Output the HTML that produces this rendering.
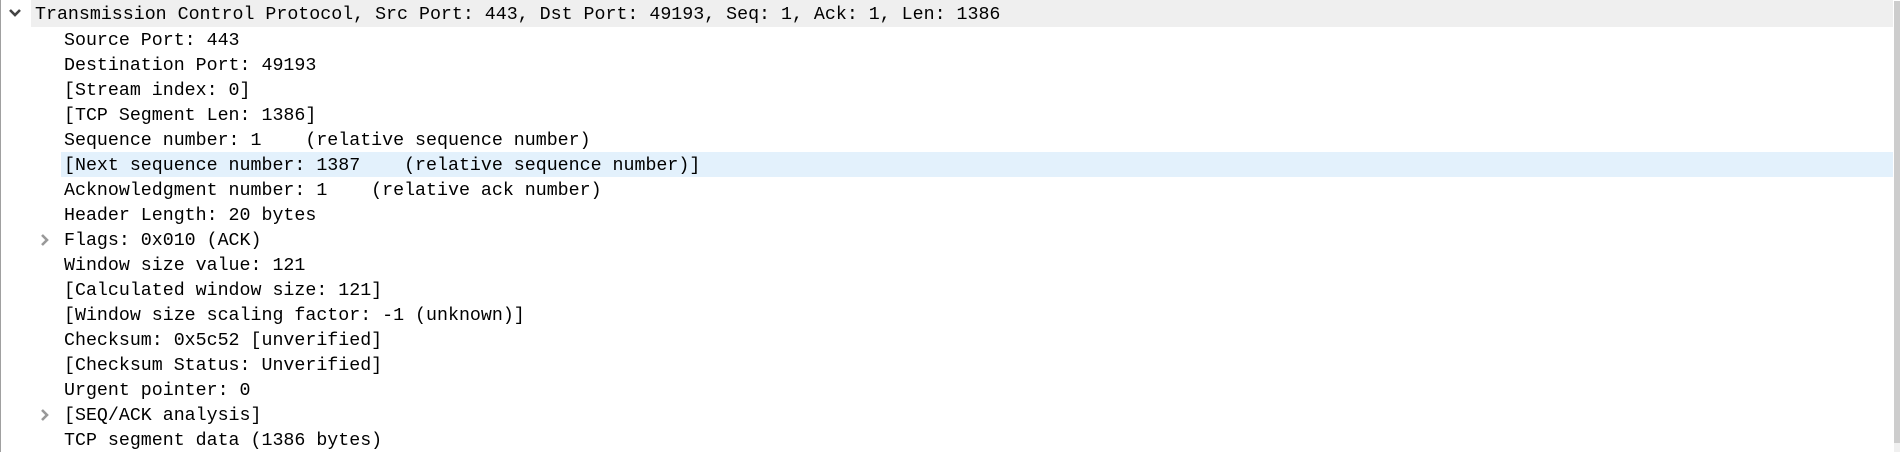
<!DOCTYPE html>
<html><head><meta charset="utf-8"><style>
html,body{margin:0;padding:0;width:1900px;height:452px;overflow:hidden;background:#fff;position:relative;
font-family:"Liberation Mono",monospace;font-size:18.3px;color:#000}
.border{position:absolute;left:0;top:0;width:1px;height:452px;background:#a0a0a0}
.sb{position:absolute;left:1894px;top:1px;width:6px;height:442px;background:#cdcdcd}
.sb2{position:absolute;left:1894px;top:443px;width:6px;height:9px;background:#f0f0f0}
.row{position:absolute;left:0;height:25px;line-height:25px;white-space:pre;margin-top:2px}
.hdr{position:absolute;left:31px;top:0;width:1862px;height:27px;background:#efefef}
.hl{position:absolute;left:61px;top:152px;width:1832px;height:25px;background:#e3f1fc}
svg{position:absolute}
</style></head><body>
<div class="border"></div>
<div class="hdr"></div>
<div class="hl"></div>
<svg style="left:7px;top:6px" width="16" height="14" viewBox="0 0 16 14"><path d="M3 4 L8 9 L13 4" fill="none" stroke="#444" stroke-width="2.6"/></svg>
<div class="row" style="left:35px;top:1px">Transmission Control Protocol, Src Port: 443, Dst Port: 49193, Seq: 1, Ack: 1, Len: 1386</div>
<div class="row" style="left:64px;top:27px">Source Port: 443</div>
<div class="row" style="left:64px;top:52px">Destination Port: 49193</div>
<div class="row" style="left:64px;top:77px">[Stream index: 0]</div>
<div class="row" style="left:64px;top:102px">[TCP Segment Len: 1386]</div>
<div class="row" style="left:64px;top:127px">Sequence number: 1    (relative sequence number)</div>
<div class="row" style="left:64px;top:152px">[Next sequence number: 1387    (relative sequence number)]</div>
<div class="row" style="left:64px;top:177px">Acknowledgment number: 1    (relative ack number)</div>
<div class="row" style="left:64px;top:202px">Header Length: 20 bytes</div>
<svg style="left:37px;top:232px" width="16" height="16" viewBox="0 0 16 16"><path d="M5 3 L10 8 L5 13" fill="none" stroke="#999" stroke-width="2.6"/></svg>
<div class="row" style="left:64px;top:227px">Flags: 0x010 (ACK)</div>
<div class="row" style="left:64px;top:252px">Window size value: 121</div>
<div class="row" style="left:64px;top:277px">[Calculated window size: 121]</div>
<div class="row" style="left:64px;top:302px">[Window size scaling factor: -1 (unknown)]</div>
<div class="row" style="left:64px;top:327px">Checksum: 0x5c52 [unverified]</div>
<div class="row" style="left:64px;top:352px">[Checksum Status: Unverified]</div>
<div class="row" style="left:64px;top:377px">Urgent pointer: 0</div>
<svg style="left:37px;top:407px" width="16" height="16" viewBox="0 0 16 16"><path d="M5 3 L10 8 L5 13" fill="none" stroke="#999" stroke-width="2.6"/></svg>
<div class="row" style="left:64px;top:402px">[SEQ/ACK analysis]</div>
<div class="row" style="left:64px;top:427px">TCP segment data (1386 bytes)</div>
<div class="sb"></div><div class="sb2"></div>
</body></html>
